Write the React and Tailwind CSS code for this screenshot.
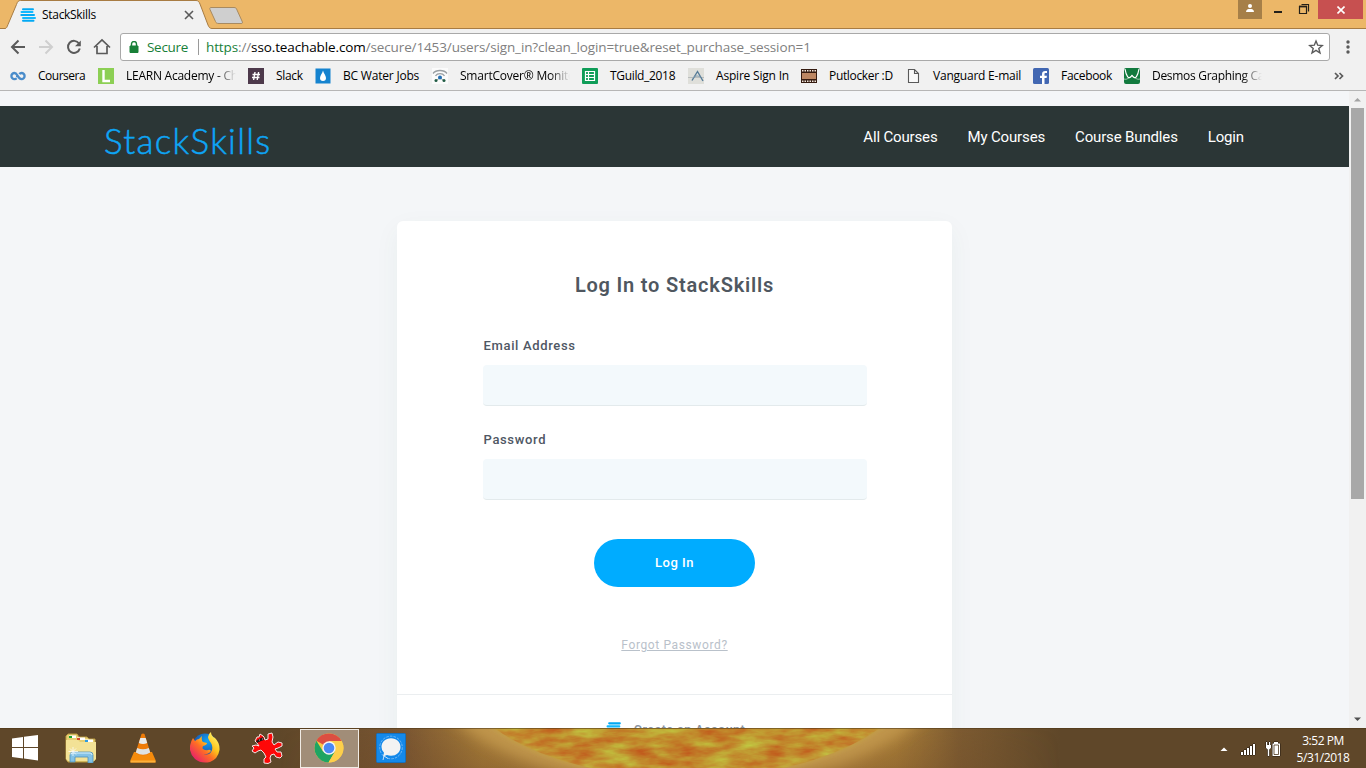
const SEG = "font-['Open_Sans','Noto_Sans',sans-serif]";

function StackIcon({ className }) {
  return (
    <svg viewBox="0 0 16 14" className={className} strokeLinecap="round" strokeWidth="2" fill="none">
      <path d="M3 1.200H13M1.300 7H14M3 12.800H13.500" stroke="#03a9f4" />
      <path d="M1.500 4.100H12.500M3 9.900H15" stroke="#12b9ff" />
    </svg>
  );
}

function CourseraIcon() {
  return (
    <svg viewBox="0 0 16 16" className="size-4 shrink-0" fill="none" stroke="#4a8cca" strokeWidth="2.300">
      <path d="M6.600 10.200C5.900 11 5.200 11.200 4.500 11.200A3.100 3.100 0 0 1 4.500 5C7.500 5 8 11.200 11.500 11.200A3.100 3.100 0 0 0 11.500 5C10.600 5 9.900 5.400 9.300 6.100M6 8h1.500" />
    </svg>
  );
}

function LearnIcon() {
  return (
    <svg viewBox="0 0 16 16" className="size-4 shrink-0">
      <rect width="16" height="16" fill="#8ccf54" />
      <path d="M5.500 2V13H12" fill="none" stroke="#fff" strokeWidth="2.400" />
    </svg>
  );
}

function SlackIcon() {
  return (
    <svg viewBox="0 0 16 16" className="size-4 shrink-0">
      <rect width="16" height="16" fill="#4d394b" />
      <path d="M7 4L5.600 12M10.600 4L9.200 12M4.500 6.500H12M4 9.500H11.500" stroke="#fff" strokeWidth="1.400" />
    </svg>
  );
}

function DropIcon() {
  return (
    <svg viewBox="0 0 16 16" className="size-4 shrink-0">
      <rect x=".5" y=".5" width="15" height="15" fill="#1583cf" />
      <path d="M8 2.500C7.500 5 5 7.500 5 10A3 3 0 0 0 11 10C11 7.500 8.500 5 8 2.500Z" fill="#fff" />
    </svg>
  );
}

function SmartIcon() {
  return (
    <svg viewBox="0 0 16 16" className="size-4 shrink-0" fill="none">
      <rect width="16" height="16" fill="#fbfbfb" />
      <path d="M1 5.500C4 1.500 12 1.500 15 5.500M3.500 7.800C5.500 5 10.500 5 12.500 7.800" stroke="#9a9fa3" strokeWidth="1.300" />
      <path d="M4 13L8 9.500L12 13" stroke="#8b9a95" />
      <circle cx="8" cy="9.500" r="2" fill="#2370b5" />
      <circle cx="4" cy="12.500" r="1.500" fill="#215c45" />
      <circle cx="12" cy="12.500" r="1.500" fill="#215c45" />
    </svg>
  );
}

function SheetIcon() {
  return (
    <svg viewBox="0 0 16 16" className="size-4 shrink-0">
      <rect width="16" height="16" rx="1" fill="#0f9d58" />
      <path d="M3.500 3.500h9v9h-9zM3.500 6.500h9M3.500 9.500h9M6.500 3.500v9" fill="none" stroke="#fff" strokeWidth="1.200" />
    </svg>
  );
}

function AspireIcon() {
  return (
    <svg viewBox="0 0 16 16" className="size-4 shrink-0" fill="none">
      <rect width="16" height="16" fill="#dfdfda" />
      <path d="M0 9.500H16" stroke="#b9bdbd" />
      <path d="M4 12.500L9.500 3.500L15 13" stroke="#557b98" strokeWidth="1.400" />
      <path d="M5 10C8 7 10 8 12.500 9" stroke="#7c98ab" />
    </svg>
  );
}

function FilmIcon() {
  return (
    <svg viewBox="0 0 16 16" className="size-4 shrink-0">
      <rect y="1" width="16" height="14" fill="#351b10" />
      <path d="M1 5h14v6H1z" fill="#bd8763" />
      <path d="M1 2.800H15M1 13.200H15" stroke="#f3e9df" strokeWidth="1.600" strokeDasharray="1.500 1" />
    </svg>
  );
}

function PageIcon() {
  return (
    <svg viewBox="0 0 16 16" className="size-4 shrink-0" fill="#fafafa" stroke="#5a5a5a" strokeWidth="1.100">
      <path d="M3.500 1.500H9.500L13.500 5.500V14.500H3.500ZM9.500 1.500V5.500H13.500" />
    </svg>
  );
}

function FacebookIcon() {
  return (
    <svg viewBox="0 0 16 16" className="size-4 shrink-0">
      <rect width="16" height="16" rx="1.500" fill="#4267b2" />
      <path d="M9 16V10H7V7.700H9V6.200C9 4 10.200 2.900 12.200 2.900L14 3V5.100H12.800C11.700 5.100 11.500 5.600 11.500 6.400V7.700H13.900L13.600 10H11.500V16Z" fill="#fff" />
    </svg>
  );
}

function DesmosIcon() {
  return (
    <svg viewBox="0 0 16 16" className="size-4 shrink-0" fill="none">
      <rect width="16" height="16" rx="2" fill="#127a3e" />
      <path d="M0 11C3 12 5 10 8 7C11 10 13 12 16 11" stroke="#9bcbae" />
      <path d="M1 1C2 7 4.500 13 8 7.500C11.500 13 14 7 15 1" stroke="#fff" strokeWidth="1.200" />
    </svg>
  );
}

const BOOKMARKS = [
  { Icon: CourseraIcon, label: "Coursera", item: "w-[88px]", text: "tracking-[-0.5px]" },
  { Icon: LearnIcon, label: "LEARN Academy - Chr", item: "w-[150px]", text: "tracking-[-0.25px]", fade: true },
  { Icon: SlackIcon, label: "Slack", item: "w-[67px]", text: "tracking-[-0.35px]" },
  { Icon: DropIcon, label: "BC Water Jobs", item: "w-[117px]", text: "tracking-[-0.2px]" },
  { Icon: SmartIcon, label: "SmartCover® Monitor", item: "w-[150px]", text: "tracking-[-0.22px]", fade: true },
  { Icon: SheetIcon, label: "TGuild_2018", item: "w-[106px]", text: "tracking-[-0.33px]" },
  { Icon: AspireIcon, label: "Aspire Sign In", item: "w-[113px]", text: "tracking-[-0.2px]" },
  { Icon: FilmIcon, label: "Putlocker :D", item: "w-[104px]", text: "tracking-[-0.33px]" },
  { Icon: PageIcon, label: "Vanguard E-mail", item: "w-[128px]", text: "tracking-[-0.22px]" },
  { Icon: FacebookIcon, label: "Facebook", item: "w-[91px]", text: "tracking-[-0.3px]" },
  { Icon: DesmosIcon, label: "Desmos Graphing Calc", item: "w-[150px]", text: "tracking-[-0.3px]", fade: true },
];

function TitleBar() {
  return (
    <div className="relative h-[29px] shrink-0 bg-[#ecb768]">
      <svg viewBox="0 0 1366 29" className="absolute inset-0 h-[29px] w-[1366px]">
        <path d="M0 28.500H5C6.500 28.500 7 27 8 24.500L16.500 4.500C17.500 1.500 18.500 .5 20.500 .5H196C198 .5 199 1.500 200 4L208 25C209 27.500 210 28.500 212 28.500H1366V30H0Z" fill="#f1f1f1" stroke="#a87c43" />
        <path d="M211 7.500H234C236 7.500 236.500 8.500 237 10L242 21C243 23 242.500 23.500 241 23.500H219C217 23.500 216 23 215.500 21.500L210 9.500C209.500 8 210 7.500 211 7.500Z" fill="#cfcfcf" stroke="#a88a60" />
      </svg>
      <div className="relative flex h-full items-start">
        <StackIcon className="mt-2 ml-5 h-[14px] w-4" />
        <span className={`${SEG} mt-[6px] ml-[6px] w-[138px] text-[12px] leading-[18px] tracking-[-0.3px] text-black`}>StackSkills</span>
        <svg viewBox="0 0 10 10" className="mt-[10px] ml-1 size-[10px]" stroke="#5a5a5a" strokeWidth="1.600">
          <path d="M1 1L9 9M9 1L1 9" />
        </svg>
        <div className="ml-auto flex h-[19px] items-start">
          <div className="flex h-[19px] w-6 justify-center bg-[#a67f48]">
            <svg viewBox="0 0 8 9" className="mt-1 h-[9px] w-2" fill="#fff">
              <circle cx="4" cy="2" r="2" />
              <path d="M0 8C0 5.500 2 5 4 5S8 5.500 8 8Z" />
            </svg>
          </div>
          <svg viewBox="0 0 56 19" className="h-[19px] w-14" fill="none" stroke="#242019">
            <path d="M12 12H20" strokeWidth="2" />
            <path d="M37.500 6.500H44.500V13.500H37.500Z" strokeWidth="1.200" />
            <path d="M37 6.500H45" strokeWidth="1.800" />
            <path d="M39.500 4.500H46.500V11.500" strokeWidth="1.200" />
          </svg>
          <div className="mr-[3px] flex h-[19px] w-[45px] items-center justify-center bg-[#c75050]">
            <svg viewBox="0 0 8 8" className="size-2" stroke="#fff" strokeWidth="1.600">
              <path d="M.5 .5L7.500 7.500M7.500 .5L.5 7.500" />
            </svg>
          </div>
        </div>
      </div>
    </div>
  );
}

function AddressBar() {
  return (
    <div className="flex h-[35px] shrink-0 items-center">
      <svg viewBox="0 0 120 28" className="h-7 w-[120px] shrink-0" fill="none" stroke="#5a5a5a" strokeWidth="2">
        <path d="M25 14H12.500M18.500 7.500L12 14L18.500 20.500" />
        <path d="M39 14H51.500M45.500 7.500L52 14L45.500 20.500" stroke="#cfcfcf" />
        <path d="M79 10.500A6 6 0 1 0 79.800 15.500" />
        <path d="M80.800 7.500V13.300H75Z" fill="#5a5a5a" stroke="none" />
        <path d="M94 14.500L102 7L110 14.500M97 13V20.500H107V13" strokeWidth="1.700" />
      </svg>
      <div className={`${SEG} flex h-7 w-[1210px] items-center rounded-[3px] border border-[#a9a9a9] bg-white text-[14px]`}>
        <svg viewBox="0 0 10 12" className="ml-2 h-3 w-[10px] shrink-0">
          <path d="M1 5H9V11.500H1Z" fill="#188038" stroke="#188038" />
          <path d="M2.500 5V3A2.500 2.500 0 0 1 7.500 3V5" fill="none" stroke="#188038" strokeWidth="1.400" />
        </svg>
        <span className="ml-2 w-[51px] pt-[2px] text-[13.5px] tracking-[-0.3px] whitespace-nowrap text-[#188038]">Secure</span>
        <span className="h-4 w-px bg-[#9a9a9a]" />
        <span className="ml-[7px] pt-[2px] text-[13.5px] tracking-[-0.12px] whitespace-nowrap text-[#808080]">
          <span className="text-[#188038]">https</span>://<span className="text-black">sso.teachable.com</span>/secure/1453/users/sign_in?clean_login=true&amp;reset_purchase_session=1
        </span>
        <svg viewBox="0 0 16 16" className="mr-[5px] ml-auto size-4" fill="none" stroke="#5a5a5a" strokeWidth="1.400">
          <path d="M8 2L9.700 6.200L14.300 6.500L10.800 9.400L12 14L8 11.400L4 14L5.200 9.400L1.700 6.500L6.300 6.200Z" />
        </svg>
      </div>
      <svg viewBox="0 0 4 14" className="ml-4 h-[14px] w-1" fill="#5a5a5a">
        <circle cx="2" cy="2" r="1.700" />
        <circle cx="2" cy="7" r="1.700" />
        <circle cx="2" cy="12" r="1.700" />
      </svg>
    </div>
  );
}

function BookmarkBar() {
  return (
    <div className="flex h-[27px] shrink-0 items-center border-b border-[#b6b6b6] pb-[2px] pl-[10px]">
      {BOOKMARKS.map(({ Icon, label, item, text, fade }) => (
        <div key={label} className={`flex shrink-0 items-center gap-3 ${item}`}>
          <Icon />
          <div className={fade ? "w-[110px] overflow-hidden mask-r-from-[82%] mask-r-to-[100%]" : ""}>
            <span className={`${SEG} block text-[12px] leading-[18px] whitespace-nowrap text-black ${text}`}>{label}</span>
          </div>
        </div>
      ))}
      <svg viewBox="0 0 10 8" className="ml-[60px] h-2 w-[10px]" fill="none" stroke="#5a5a5a" strokeWidth="1.700">
        <path d="M1 1L4 4L1 7M5.500 1L8.500 4L5.500 7" />
      </svg>
    </div>
  );
}

function Field({ label, type, className }) {
  return (
    <label className={`block ${className}`}>
      <span className="block h-[15px] pl-px text-[13px] leading-[15px] font-medium tracking-[0.65px] text-[#4f5764]">{label}</span>
      <input type={type} className="mt-3 block h-[41px] w-full rounded-[4px] border-b border-[#e3eaec] bg-[#f3f9fc] px-3 outline-none" />
    </label>
  );
}

function SitePage() {
  return (
    <main className="flex min-w-0 flex-1 flex-col overflow-hidden bg-[#f4f6f8] pt-[15px] font-['Roboto',sans-serif]">
      <header className="flex h-[61px] shrink-0 items-center justify-between bg-[#2b3636] pr-[105px] pl-[104px]">
        <span className="mt-[6px] font-['Lato',sans-serif] text-[35px] leading-[44px] font-light tracking-[1.3px] whitespace-nowrap text-[#0ea5f5] [-webkit-text-stroke:0.5px_#0ea5f5]">StackSkills</span>
        <nav className="flex gap-[30px] text-[15px] leading-5 tracking-[-0.15px] text-white">
          <a>All Courses</a>
          <a>My Courses</a>
          <a>Course Bundles</a>
          <a>Login</a>
        </nav>
      </header>
      <section className="mt-[54px] h-[620px] w-[555px] shrink-0 self-center rounded-[6px] bg-white shadow-[0_8px_26px_rgba(43,90,70,0.05)]">
        <h1 className="pt-[52px] text-center text-[20px] leading-6 font-semibold tracking-[0.8px] text-[#4f5760]">Log In to StackSkills</h1>
        <form className="mx-auto w-[384px]">
          <Field label="Email Address" type="email" className="mt-[41px]" />
          <Field label="Password" type="password" className="mt-[26px]" />
          <button type="button" className="mx-auto mt-[39px] block h-12 w-[161px] rounded-full bg-[#00acff] text-[13px] font-medium tracking-[0.5px] text-white">Log In</button>
        </form>
        <a className="mt-[50px] block text-center text-[12px] leading-4 tracking-[0.62px] text-[#b9c1ca] underline">Forgot Password?</a>
        <div className="mt-[41px] flex items-start justify-center gap-[11px] border-t border-[#ebeef0] pt-[27px] pl-[2px]">
          <StackIcon className="h-[15px] w-[17px]" />
          <span className="-mt-px text-[12.5px] leading-[17px] font-semibold tracking-[0.47px] text-[#8a939f]">Create an Account</span>
        </div>
      </section>
    </main>
  );
}

function ScrollBar() {
  return (
    <div className="flex w-[17px] shrink-0 flex-col items-center bg-[#f1f1f1]">
      <svg viewBox="0 0 17 17" className="size-[17px]"><path d="M5 10.500L8.500 7L12 10.500Z" fill="#a3a3a3" /></svg>
      <div className="h-[391px] w-[13px] bg-[#a8a8a8]" />
      <svg viewBox="0 0 17 17" className="mt-auto size-[17px]"><path d="M5 6.500L8.500 10L12 6.500Z" fill="#505050" /></svg>
    </div>
  );
}

function Wallpaper() {
  return (
    <svg viewBox="0 0 1366 40" className="absolute inset-0 h-10 w-[1366px]">
      <defs>
        <linearGradient id="halo">
          <stop offset="0" stopColor="#5f4729" />
          <stop offset=".16" stopColor="#7a5632" />
          <stop offset=".26" stopColor="#a77c38" />
          <stop offset=".36" stopColor="#ba8a3e" />
          <stop offset=".72" stopColor="#ba8a3e" />
          <stop offset=".79" stopColor="#aa7e38" />
          <stop offset=".87" stopColor="#7d5b31" />
          <stop offset="1" stopColor="#5f4729" />
        </linearGradient>
        <linearGradient id="shade" x2="0" y2="1">
          <stop offset="0" stopColor="#694626" stopOpacity="0" />
          <stop offset="1" stopColor="#694626" stopOpacity=".32" />
        </linearGradient>
        <linearGradient id="shadeEnds">
          <stop offset="0" stopColor="#fff" stopOpacity="0" />
          <stop offset=".2" stopColor="#fff" />
          <stop offset=".8" stopColor="#fff" />
          <stop offset="1" stopColor="#fff" stopOpacity="0" />
        </linearGradient>
        <mask id="shadeMask"><rect x="280" width="780" height="40" fill="url(#shadeEnds)" /></mask>
        <radialGradient id="sun" gradientUnits="userSpaceOnUse" cx="0" cy="0" r="1" gradientTransform="translate(687 -60) scale(233 112)">
          <stop offset=".7" stopColor="#c0812c" />
          <stop offset=".9" stopColor="#c18b30" />
          <stop offset=".97" stopColor="#c2993d" />
          <stop offset="1" stopColor="#c19c4c" />
        </radialGradient>
        <filter id="plasma" x="0" y="0" width="100%" height="100%" colorInterpolationFilters="sRGB">
          <feTurbulence type="fractalNoise" baseFrequency=".03 .1" numOctaves="4" seed="8" />
          <feColorMatrix values="0 0 0 0 .76  .9 0 0 0 .12  .3 0 0 0 .03  0 0 0 0 1" />
          <feComposite in2="SourceGraphic" operator="in" />
        </filter>
        <filter id="soft" x="-10%" y="-10%" width="120%" height="120%"><feGaussianBlur stdDeviation="7" /></filter>
        <filter id="edge"><feGaussianBlur stdDeviation="1.500" /></filter>
      </defs>
      <rect width="1366" height="40" fill="#5f4729" />
      <rect x="280" width="780" height="40" fill="url(#halo)" />
      <rect x="280" width="780" height="40" fill="url(#shade)" mask="url(#shadeMask)" />
      <ellipse cx="687" cy="-60" rx="258" ry="118" fill="#c0954c" filter="url(#soft)" />
      <ellipse cx="687" cy="-60" rx="233" ry="112" fill="url(#sun)" filter="url(#edge)" />
      <ellipse cx="687" cy="-60" rx="230" ry="110" fill="#fff" filter="url(#plasma)" opacity=".65" />
      <path d="M0 .5H1366" stroke="#4d3618" strokeOpacity=".55" />
    </svg>
  );
}

function WindowsLogo() {
  return (
    <svg viewBox="0 0 26 26" className="h-[26px] w-[26px]" fill="#fff">
      <path d="M0 3.500L11 2V12H0ZM12 1.800L26 0V12H12ZM0 13H11V23.500L0 22ZM12 13H26V25.500L12 23.600Z" />
    </svg>
  );
}

function ExplorerIcon() {
  return (
    <svg viewBox="0 0 32 30" className="h-[30px] w-8">
      <path d="M1 26V3L3 1H12L14 4H22L24 6H30V27L28 29H3Z" fill="#e7cf72" stroke="#b99b43" />
      <path d="M4 2.500H11V5H4ZM12 4.500H20V7H12ZM20 6.500H28V9H20Z" fill="#fff" />
      <path d="M4 3H7V5H4Z" fill="#18a430" />
      <path d="M12 5H15V7H12Z" fill="#d4472c" />
      <path d="M20 7H23V9H20Z" fill="#2e9ce0" />
      <path d="M1 7H13L15 9H31V26L29 28H3L1 26Z" fill="#f3e296" />
      <path d="M5 29V22Q5 19 8 19H25Q28 19 28 22V30H23V24H10V29Z" fill="#83c2e6" stroke="#4b8fb9" strokeWidth=".8" />
      <path d="M6 21Q7 20 9 20H25Q27 20 27 22" stroke="#d9f1fc" fill="none" />
      <path d="M8 14V23M3.500 18.500H13M5 15.500L11 21.500M11 15.500L5 21.500" stroke="#fff" strokeWidth=".8" opacity=".9" />
    </svg>
  );
}

function VlcIcon() {
  return (
    <svg viewBox="0 0 26 30" className="h-[30px] w-[26px]">
      <path d="M4 19H22L25.500 27V29.500H.5V27Z" fill="#f58b0c" />
      <path d="M.5 27.500H25.500V29.500H.5Z" fill="#ffb13b" />
      <path d="M11.500 1Q13 0 14.500 1L20.500 20Q13 25 5.500 20Z" fill="#ee7b08" />
      <path d="M10.300 5H15.700L17.200 10Q13 12 8.800 10Z" fill="#e8eaeb" />
      <path d="M7.200 15Q13 17.500 18.800 15L20.200 19.500Q13 24 5.800 19.500Z" fill="#dfe2e3" />
    </svg>
  );
}

function FirefoxIcon() {
  return (
    <svg viewBox="0 0 30 31" className="-mt-[2px] h-[31px] w-[30px]">
      <defs>
        <linearGradient id="fox" x1=".9" y1=".1" x2=".15" y2=".9">
          <stop offset="0" stopColor="#fff36b" />
          <stop offset=".35" stopColor="#ffc51c" />
          <stop offset=".6" stopColor="#ff6f24" />
          <stop offset="1" stopColor="#e81f6a" />
        </linearGradient>
        <radialGradient id="globe" cx=".6" cy=".3" r=".7">
          <stop offset="0" stopColor="#12a5f5" />
          <stop offset="1" stopColor="#1c3c98" />
        </radialGradient>
      </defs>
      <circle cx="15" cy="14" r="12.500" fill="url(#globe)" />
      <path d="M3 6L5 9Q7 7 9 7L12 4Q11 8 13 10L17 11Q17 13 13 14Q12 16 13 17Q16 19 18 18Q20 17 21 19Q18 23 13 22Q20 24 22 18Q23 14 21 11Q18 7 18 5Q19 1 21 0Q21 4 25 6Q30 11 29.500 18Q28 27 20 30Q11 32 5 27Q-2 20 .5 12Q1 9 3 6Z" fill="url(#fox)" />
    </svg>
  );
}

function SplatIcon() {
  return (
    <svg viewBox="0 0 32 32" className="size-8" strokeLinejoin="round">
      <path d="M6 5L8 5L9 2L12 4L13 5L14 8L17 7L17 2L21 1L22 5L21 10L23 13L27 10L31 11L31 14L27 16L24 17L26 20L30 20L31 24L29 26L25 25L23 22L20 23L19 26L20 30L17 31.500L13 31L13 27L15 25L13 21L10 18L7 19L4 21L1 19L3 16L1 14L5 13L8 14L6 11L4 9Z" fill="#fe0808" stroke="#f4e5e5" />
      <path d="M5 9L8 7L12 5L13 8L10 9L6 11Z" fill="#221515" />
      <path d="M8 8h1M11 7h1" stroke="#bbb" />
    </svg>
  );
}

function ChromeIcon() {
  return (
    <svg viewBox="0 0 30 30" className="-mt-[2px] size-[30px]">
      <circle cx="15" cy="15" r="14.500" fill="#fbc944" />
      <path d="M15 15L2.400 7.800A14.500 14.500 0 0 1 27.600 8H15Z" fill="#dc4e41" />
      <path d="M2.400 7.800A14.500 14.500 0 0 0 14.500 29.500L21 18.500L15 15L9 18.500Z" fill="#1fa463" />
      <path d="M15 8H27.600A14.500 14.500 0 0 1 14.500 29.500L21 18.500Z" fill="#fdcf4b" />
      <circle cx="15" cy="15" r="6.700" fill="#f4f4f4" />
      <circle cx="15" cy="15" r="5.300" fill="#4a88f4" />
    </svg>
  );
}

function SignalIcon() {
  return (
    <svg viewBox="0 0 30 30" className="size-[30px]">
      <rect x=".5" y=".5" width="29" height="29" rx="1" fill="#1489ea" stroke="#1670bd" />
      <circle cx="15" cy="14.500" r="11.300" fill="none" stroke="#7dbdf5" strokeWidth=".9" strokeDasharray="2.500 1.200" />
      <path d="M7 27L8 23L12 25.500" fill="#1489ea" stroke="#c6e4fb" />
      <path d="M15 5.200C20.500 5.200 24.500 9 24.500 14S20.500 22.800 15 22.800Q12.800 22.800 11 22L7 23.500L8 19.800Q5.500 17.500 5.500 14C5.500 9 9.500 5.200 15 5.200Z" fill="#f3f3f3" />
    </svg>
  );
}

function Taskbar() {
  return (
    <footer className="relative h-10 shrink-0 overflow-hidden">
      <Wallpaper />
      <div className="relative flex h-full items-center">
        <div className="flex w-[50px] justify-center"><WindowsLogo /></div>
        <div className="flex w-[62px] justify-center"><ExplorerIcon /></div>
        <div className="flex w-[62px] justify-center"><VlcIcon /></div>
        <div className="flex w-[62px] justify-center"><FirefoxIcon /></div>
        <div className="flex w-[62px] justify-center"><SplatIcon /></div>
        <div className="flex w-[62px] justify-center">
          <div className="mt-px flex h-[39px] w-[59px] items-center justify-center border border-[#f0ebe5] bg-[#a18d78]"><ChromeIcon /></div>
        </div>
        <div className="flex w-[62px] justify-center"><SignalIcon /></div>
        <svg viewBox="0 0 64 18" className="mt-[2px] ml-auto h-[18px] w-16" fill="#fff">
          <path d="M.5 11L4 7.500L7.500 11Z" />
          <g stroke="#241b10" strokeWidth="1" paintOrder="stroke">
            <path d="M21 12h2v3h-2zM24 10h2v5h-2zM27 8h2v7h-2zM30 6h2v9h-2zM33 4h2V15h-2z" />
            <path d="M46 2h1.200v3H49V2h1.200v3H51v3L49.200 9.500V16H47.800V9.500L46 8z" />
            <path d="M54 2h4v1.500h2V16H52.500V3.500H54z" />
          </g>
          <path d="M54 5h4.500v9.500H54z" fill="none" stroke="#4c3820" strokeWidth=".8" />
        </svg>
        <div className={`${SEG} mr-[7px] ml-[3px] w-[72px] text-center text-[12px] leading-[17px] tracking-[-0.45px] whitespace-nowrap text-white`}>
          <div className="mt-px">3:52 PM</div>
          <div>5/31/2018</div>
        </div>
      </div>
    </footer>
  );
}

export default function App() {
  return (
    <div className="flex h-[768px] w-[1366px] flex-col overflow-hidden bg-[#f1f1f1]">
      <TitleBar />
      <AddressBar />
      <BookmarkBar />
      <div className="flex min-h-0 flex-1">
        <SitePage />
        <ScrollBar />
      </div>
      <Taskbar />
    </div>
  );
}
